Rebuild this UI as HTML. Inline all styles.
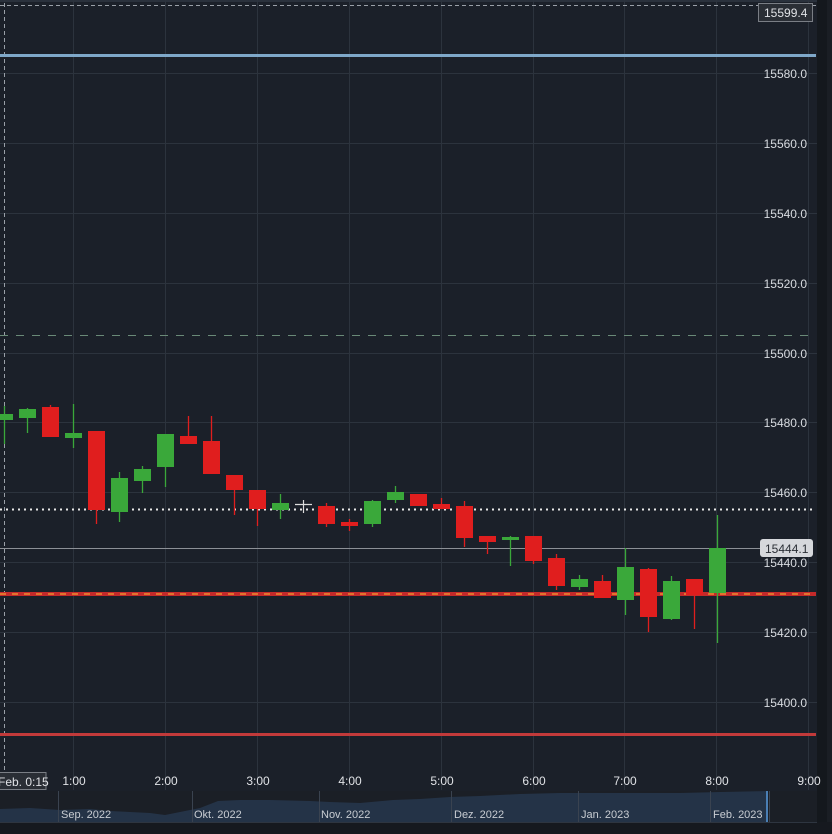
<!DOCTYPE html>
<html><head><meta charset="utf-8"><style>
html,body{margin:0;padding:0;background:#1b2029;}
svg{display:block;font-family:"Liberation Sans",sans-serif;}
</style></head><body>
<svg width="832" height="834" xmlns="http://www.w3.org/2000/svg">
<rect width="832" height="834" fill="#1b2029"/>
<rect x="0" y="0" width="832" height="2" fill="#2a313c"/>
<!-- right strip -->
<rect x="817" y="0" width="15" height="834" fill="#14181d"/>
<rect x="827" y="0" width="5" height="834" fill="#1a1e24"/>
<!-- grid -->
<g stroke="#2c333d" stroke-width="1">
<line x1="73.5" y1="0" x2="73.5" y2="790"/>
<line x1="165.5" y1="0" x2="165.5" y2="790"/>
<line x1="257.5" y1="0" x2="257.5" y2="790"/>
<line x1="349.5" y1="0" x2="349.5" y2="790"/>
<line x1="441.5" y1="0" x2="441.5" y2="790"/>
<line x1="533.5" y1="0" x2="533.5" y2="790"/>
<line x1="624.5" y1="0" x2="624.5" y2="790"/>
<line x1="716.5" y1="0" x2="716.5" y2="790"/>
<line x1="808.5" y1="0" x2="808.5" y2="790"/>
<line x1="0" y1="73.5" x2="817" y2="73.5"/>
<line x1="0" y1="143.5" x2="817" y2="143.5"/>
<line x1="0" y1="213.5" x2="817" y2="213.5"/>
<line x1="0" y1="283.5" x2="817" y2="283.5"/>
<line x1="0" y1="353.5" x2="817" y2="353.5"/>
<line x1="0" y1="422.5" x2="817" y2="422.5"/>
<line x1="0" y1="492.5" x2="817" y2="492.5"/>
<line x1="0" y1="562.5" x2="817" y2="562.5"/>
<line x1="0" y1="632.5" x2="817" y2="632.5"/>
<line x1="0" y1="702.5" x2="817" y2="702.5"/>
</g>
<!-- top dashed + left dashed -->
<line x1="0" y1="5.5" x2="816" y2="5.5" stroke="#9aa0a8" stroke-width="1" stroke-dasharray="4,3"/>
<line x1="4.5" y1="3" x2="4.5" y2="790" stroke="#9aa0a8" stroke-width="1" stroke-dasharray="4,3"/>
<!-- blue line -->
<rect x="0" y="54" width="816" height="3" fill="#7fa8c9"/>
<!-- dashed green-gray -->
<line x1="0" y1="335.5" x2="816" y2="335.5" stroke="#6a8a78" stroke-width="1" stroke-dasharray="8,8"/>
<!-- white dotted -->
<line x1="0" y1="509.5" x2="816" y2="509.5" stroke="#e8e8e8" stroke-width="2" stroke-dasharray="2,4"/>
<!-- gray last price line -->
<line x1="0" y1="548.5" x2="760" y2="548.5" stroke="#8c9096" stroke-width="1"/>
<!-- red + orange dashed -->
<rect x="0" y="592" width="816" height="4" fill="#c42a2a"/>
<line x1="0" y1="594" x2="816" y2="594" stroke="#f0a030" stroke-width="1.2" stroke-dasharray="6,6"/>
<!-- red bottom line -->
<rect x="0" y="733" width="816" height="3" fill="#c23a3a"/>
<!-- candles -->
<g stroke-width="1.3">
<g stroke="#3aa83a" fill="#3aa83a">
<line x1="4.5" y1="406" x2="4.5" y2="444"/><rect x="0" y="414" width="13" height="6" stroke="none"/>
<line x1="27.5" y1="408" x2="27.5" y2="433"/><rect x="19" y="409" width="17" height="9" stroke="none"/>
<line x1="73.5" y1="404" x2="73.5" y2="448"/><rect x="65" y="433" width="17" height="5" stroke="none"/>
<line x1="119.5" y1="472" x2="119.5" y2="522"/><rect x="111" y="478" width="17" height="34" stroke="none"/>
<line x1="142.5" y1="466" x2="142.5" y2="493"/><rect x="134" y="469" width="17" height="12" stroke="none"/>
<line x1="165.5" y1="434" x2="165.5" y2="487"/><rect x="157" y="434" width="17" height="33" stroke="none"/>
<line x1="280.5" y1="494" x2="280.5" y2="519"/><rect x="272" y="503" width="17" height="7" stroke="none"/>
<line x1="372.5" y1="500" x2="372.5" y2="527"/><rect x="364" y="501" width="17" height="23" stroke="none"/>
<line x1="395.5" y1="486" x2="395.5" y2="503"/><rect x="387" y="492" width="17" height="8" stroke="none"/>
<line x1="510.5" y1="536" x2="510.5" y2="566"/><rect x="502" y="537" width="17" height="3" stroke="none"/>
<line x1="579.5" y1="575" x2="579.5" y2="590"/><rect x="571" y="579" width="17" height="8" stroke="none"/>
<line x1="625.5" y1="548" x2="625.5" y2="615"/><rect x="617" y="567" width="17" height="33" stroke="none"/>
<line x1="671.5" y1="576" x2="671.5" y2="620"/><rect x="663" y="581" width="17" height="38" stroke="none"/>
<line x1="717.5" y1="515" x2="717.5" y2="643"/><rect x="709" y="548" width="17" height="45" stroke="none"/>
</g>
<g stroke="#e01e1e" fill="#e01e1e">
<line x1="50.5" y1="405" x2="50.5" y2="437"/><rect x="42" y="407" width="17" height="30" stroke="none"/>
<line x1="96.5" y1="431" x2="96.5" y2="524"/><rect x="88" y="431" width="17" height="79" stroke="none"/>
<line x1="188.5" y1="416" x2="188.5" y2="444"/><rect x="180" y="436" width="17" height="8" stroke="none"/>
<line x1="211.5" y1="416" x2="211.5" y2="474"/><rect x="203" y="441" width="17" height="33" stroke="none"/>
<line x1="234.5" y1="475" x2="234.5" y2="515"/><rect x="226" y="475" width="17" height="15" stroke="none"/>
<line x1="257.5" y1="490" x2="257.5" y2="526"/><rect x="249" y="490" width="17" height="19" stroke="none"/>
<line x1="326.5" y1="503" x2="326.5" y2="527"/><rect x="318" y="506" width="17" height="18" stroke="none"/>
<line x1="349.5" y1="519" x2="349.5" y2="531"/><rect x="341" y="522" width="17" height="4" stroke="none"/>
<rect x="410" y="494" width="17" height="12" stroke="none"/>
<line x1="441.5" y1="498" x2="441.5" y2="509"/><rect x="433" y="504" width="17" height="5" stroke="none"/>
<line x1="464.5" y1="501" x2="464.5" y2="547"/><rect x="456" y="506" width="17" height="32" stroke="none"/>
<line x1="487.5" y1="536" x2="487.5" y2="554"/><rect x="479" y="536" width="17" height="6" stroke="none"/>
<line x1="533.5" y1="536" x2="533.5" y2="564"/><rect x="525" y="536" width="17" height="25" stroke="none"/>
<line x1="556.5" y1="554" x2="556.5" y2="590"/><rect x="548" y="558" width="17" height="28" stroke="none"/>
<line x1="602.5" y1="575" x2="602.5" y2="598"/><rect x="594" y="581" width="17" height="17" stroke="none"/>
<line x1="648.5" y1="568" x2="648.5" y2="632"/><rect x="640" y="569" width="17" height="48" stroke="none"/>
<line x1="694.5" y1="579" x2="694.5" y2="629"/><rect x="686" y="579" width="17" height="16" stroke="none"/>
</g>
</g>
<!-- crosshair -->
<g stroke="#dcdcdc" stroke-width="1.2"><line x1="295" y1="504.5" x2="312" y2="504.5"/><line x1="303.5" y1="500" x2="303.5" y2="513"/></g>
<!-- price labels -->
<g fill="#d8dbe0" font-size="12" text-anchor="end">
<text x="807" y="78">15580.0</text>
<text x="807" y="148">15560.0</text>
<text x="807" y="218">15540.0</text>
<text x="807" y="288">15520.0</text>
<text x="807" y="358">15500.0</text>
<text x="807" y="427">15480.0</text>
<text x="807" y="497">15460.0</text>
<text x="807" y="567">15440.0</text>
<text x="807" y="637">15420.0</text>
<text x="807" y="707">15400.0</text>
</g>
<rect x="758.5" y="3.5" width="54" height="18" fill="#2a2e35" stroke="#7a7e85"/>
<text x="764" y="17" fill="#e0e2e6" font-size="12">15599.4</text>
<rect x="760" y="539" width="53" height="18" rx="3" fill="#d6d8dc"/>
<text x="765" y="553" fill="#2a2e35" font-size="12">15444.1</text>
<!-- time axis -->
<g fill="#e0e2e6" font-size="12" text-anchor="middle">
<text x="74" y="785">1:00</text>
<text x="166" y="785">2:00</text>
<text x="258" y="785">3:00</text>
<text x="350" y="785">4:00</text>
<text x="442" y="785">5:00</text>
<text x="534" y="785">6:00</text>
<text x="625" y="785">7:00</text>
<text x="717" y="785">8:00</text>
<text x="809" y="785">9:00</text>
</g>
<rect x="-1" y="772.5" width="47" height="17" fill="#2a2e35" stroke="#7a7e85"/>
<text x="-2" y="786" fill="#e0e2e6" font-size="12">Feb. 0:15</text>
<!-- navigator -->
<rect x="0" y="791" width="817" height="31" fill="#1b1f26"/>
<path d="M0,809 L30,808 L60,810 L90,809 L110,811 L130,812 L150,813 L165,815 L180,812 L200,808 L218,801 L240,800 L270,800 L310,801 L330,802 L360,803 L393,800 L420,799 L450,797 L480,796 L520,794 L560,793 L600,793 L640,793 L680,793 L720,792 L766,791 L766,822 L0,822 Z" fill="#243347"/>
<rect x="766" y="791" width="2" height="31" fill="#4a7fb5"/>
<g stroke="#3a4350"><line x1="58.5" y1="791" x2="58.5" y2="822"/><line x1="192.5" y1="791" x2="192.5" y2="822"/><line x1="319.5" y1="791" x2="319.5" y2="822"/><line x1="451.5" y1="791" x2="451.5" y2="822"/><line x1="578.5" y1="791" x2="578.5" y2="822"/><line x1="710.5" y1="791" x2="710.5" y2="822"/><line x1="769.5" y1="791" x2="769.5" y2="822"/></g>
<g fill="#c8ccd2" font-size="11">
<text x="61" y="818">Sep. 2022</text>
<text x="194" y="818">Okt. 2022</text>
<text x="321" y="818">Nov. 2022</text>
<text x="454" y="818">Dez. 2022</text>
<text x="581" y="818">Jan. 2023</text>
<text x="713" y="818">Feb. 2023</text>
</g>
<rect x="0" y="822" width="832" height="12" fill="#16191f"/>
<line x1="0" y1="822.5" x2="817" y2="822.5" stroke="#2e3540"/>
</svg>
</body></html>
